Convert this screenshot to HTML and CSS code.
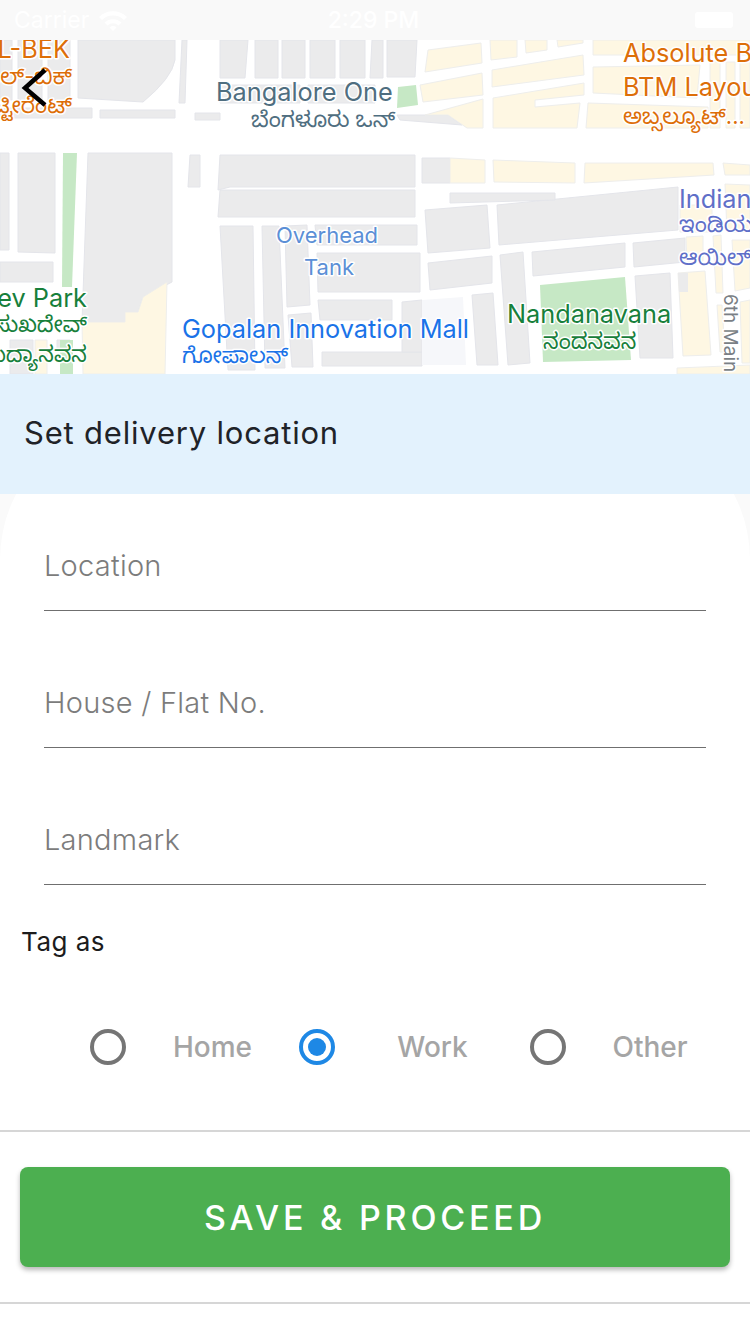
FILE: index.html
```html
<!DOCTYPE html>
<html lang="en">
<head>
  <meta charset="utf-8" />
  <meta name="viewport" content="width=device-width, initial-scale=1" />
  <title>Set delivery location</title>
  <link rel="stylesheet" href="styles.css">
</head>
<body>
  <div class="status-bar">
    <div class="status-left">
      <span>Carrier</span>
      <svg class="wifi" width="30" height="22" viewBox="0 0 30 22">
        <path d="M1 8a20 20 0 0 1 28 0l-3 3a16 16 0 0 0-22 0z" />
        <path d="M6.500 13.500a12.500 12.500 0 0 1 17 0l-3 3a8 8 0 0 0-11 0z" />
        <path d="M11.500 18.500a5 5 0 0 1 7 0l-3.500 3.500z" />
      </svg>
    </div>
    <span class="status-time">2:29 PM</span>
    <div class="battery"></div>
  </div>

  <div class="map">
    <svg class="map-svg" width="750" height="334" viewBox="0 40 750 334">
      <!-- buildings -->
      <g class="blocks">
        <path d="M0 40H12V100H0Z" />
        <path d="M18 40H42V100H18Z" />
        <path d="M48 40H70V100H48Z" />
        <path d="M78 40H175V60Q172 78 143 102L78 98Z" />
        <path d="M182 40H187L185 103H179Z" />
        <path d="M0 108H92V118H0Z" />
        <path d="M100 110H175V118H100Z" />
        <path d="M195 113H220V120H195Z" />
        <path d="M220 40H248L245 78H220Z" />
        <path d="M255 40H278V78H255Z" />
        <path d="M282 40H305V78H282Z" />
        <path d="M310 40H335V78H310Z" />
        <path d="M340 40H365V78H340Z" />
        <path d="M372 40H383V78H370Z" />
        <path d="M220 85H300V103H220Z" />
        <path d="M308 85H375V103H308Z" />
        <path d="M387 40H417L415 77H387Z" />
        <path d="M397 115H448L462 125L400 120Z" />
        <path d="M0 153H9V250H0Z" />
        <path d="M18 153H55V253L18 252Z" />
        <path d="M88 153H172V282L143 297L138 312H125V322H82Z" />
        <path d="M190 155H200V187H188Z" />
        <path d="M220 155H415V187H230L218 190Z" />
        <path d="M422 158H450V183H422Z" />
        <path d="M0 262H53V282H0Z" />
        <path d="M10 340H33V374H10Z" />
        <path d="M57 340H70V350H57Z" />
        <path d="M220 190H415V217H218Z" />
        <path d="M220 226H253L255 370H228Z" />
        <path d="M262 226H279L285 368H265Z" />
        <path d="M285 226L307 225L310 305L287 307Z" />
        <path d="M288 315L311 313L313 367H292Z" />
        <path d="M315 225H417V245H317Z" />
        <path d="M317 253H420V292H318Z" />
        <path d="M318 300H392V320H320Z" />
        <path d="M322 352H422V366H322Z" />
        <path d="M402 302L422 300V352H402Z" />
        <path d="M425 210L487 205L490 248L428 253Z" />
        <path d="M497 205L678 187V230L499 245Z" />
        <path d="M428 263L492 256L492 283L430 290Z" />
        <path d="M532 252L625 243L625 267L533 276Z" />
        <path d="M633 243L685 238V262L634 267Z" />
        <path d="M500 255L523 252L530 363L508 365Z" />
        <path d="M472 295L493 293L498 365L477 365Z" />
        <path d="M635 276L670 273L673 358L640 358Z" />
        <path d="M450 193H555V200L450 203Z" />
      </g>
      <path class="pale" d="M422 300L463 297L466 365H422Z" />
      <!-- residential patches -->
      <g class="cream">
        <path d="M428 50L481 43L482 63L425 72Z" />
        <path d="M490 40H517V57L491 60Z" />
        <path d="M525 40H547V50L526 53Z" />
        <path d="M557 40H583V43L558 47Z" />
        <path d="M593 40H750V55H593Z" />
        <path d="M420 85L482 73L483 95L423 102Z" />
        <path d="M492 70L583 55L584 75L492 87Z" />
        <path d="M493 98L584 83L584 95L535 100V107L580 103L577 128H493Z" />
        <path d="M425 115L483 99V128H467L448 115Z" />
        <path d="M593 67L700 65L697 98L593 93Z" />
        <path d="M588 103L708 107V128H586Z" />
        <path d="M710 62H720V128H710Z" />
        <path d="M726 62H735V128H726Z" />
        <path d="M740 62H750V128H740Z" />
        <path d="M450 158L485 160V183H450Z" />
        <path d="M493 160L575 163V183L494 182Z" />
        <path d="M585 163H713L714 175L584 183Z" />
        <path d="M723 163L750 165V175H725Z" />
        <path d="M82 322H125V312H138L143 297L167 282L165 374H83Z" />
        <path d="M35 340H47V374H35Z" />
        <path d="M680 205H712V232H680Z" />
        <path d="M725 184L750 185V232H727Z" />
        <path d="M686 237L703 236V261L687 262Z" />
        <path d="M713 236L721 235L723 293H716Z" />
        <path d="M732 240H750V288L735 291Z" />
        <path d="M678 273L705 271L711 355L683 356Z" />
        <path d="M717 305H722L725 352H720Z" />
        <path d="M740 302L750 300V363H742Z" />
        <path d="M677 368L750 365V374H677Z" />
      </g>
      <path class="corner" d="M678 273H688V292H679Z" />
      <!-- parks -->
      <g class="park">
        <path d="M398 87L416 85L418 105L397 108Z" />
        <path d="M63 153H77L72 287H62Z" />
        <path d="M60 340H73V374H60Z" />
        <path d="M540 285L625 277L631 360L543 362Z" />
      </g>
      <!-- labels -->
      <g class="labels">
        <text class="orange lg" x="70" y="58" text-anchor="end">L-BEK</text>
        <text class="orange sm" x="72" y="84" text-anchor="end">ಎಲ್-ಬಿಕ್</text>
        <text class="orange sm" x="72" y="113" text-anchor="end">ಟ್ಟೀರೆಂಟ್</text>
        <text class="slate lg" x="216" y="101">Bangalore One</text>
        <text class="slate sm" x="251" y="127">ಬೆಂಗಳೂರು ಒನ್</text>
        <text class="orange lg" x="623" y="62">Absolute B</text>
        <text class="orange lg" x="623" y="96">BTM Layou</text>
        <text class="orange sm" x="623" y="124">ಅಬ್ಸಲ್ಯೂಟ್...</text>
        <text class="indigo lg" x="679" y="208">Indian</text>
        <text class="indigo sm" x="679" y="232">ಇಂಡಿಯ</text>
        <text class="indigo sm" x="679" y="265">ಆಯಿಲ್</text>
        <text class="steel md" x="276" y="243">Overhead</text>
        <text class="steel md" x="304" y="275">Tank</text>
        <text class="green lg" x="87" y="307" text-anchor="end">ev Park</text>
        <text class="green sm" x="87" y="332" text-anchor="end">ಸುಖದೇವ್</text>
        <text class="green sm" x="87" y="362" text-anchor="end">ಉದ್ಯಾನವನ</text>
        <text class="blue lg" x="182" y="338">Gopalan Innovation Mall</text>
        <text class="blue sm" x="182" y="363">ಗೋಪಾಲನ್</text>
        <text class="green lg" x="507" y="323">Nandanavana</text>
        <text class="green sm" x="543" y="349">ನಂದನವನ</text>
        <text class="grey xs" transform="translate(724 294) rotate(90)">6th Main</text>
      </g>
    </svg>
    <svg class="back" width="26" height="40" viewBox="0 0 26 40">
      <path d="M24 2L4 20L24 37" />
    </svg>
  </div>

  <div class="header">Set delivery location</div>

  <div class="form-card">
    <div class="field">Location</div>
    <div class="field">House / Flat No.</div>
    <div class="field">Landmark</div>
    <div class="tag-title">Tag as</div>
    <div class="tag-row">
      <span class="radio"></span>
      <span class="tag-label">Home</span>
      <span class="radio on"></span>
      <span class="tag-label">Work</span>
      <span class="radio"></span>
      <span class="tag-label">Other</span>
    </div>
    <div class="footer-bar">
      <button class="save-btn">SAVE &amp; PROCEED</button>
    </div>
  </div>
</body>
</html>
```

FILE: styles.css
```css
* {
  box-sizing: border-box;
}
body {
  margin: 0;
  width: 750px;
  height: 1334px;
  overflow: hidden;
  background: #fafafa;
  font-family: Inter, "Noto Sans", sans-serif;
}

.status-bar {
  height: 40px;
  background: #f9f9f9;
  color: #fff;
  font-size: 23px;
  display: grid;
  grid-template-columns: 1fr auto 1fr;
  align-items: center;
  padding: 0 17px 0 14px;
}
.status-left {
  display: flex;
  align-items: center;
  gap: 9px;
}
.wifi {
  fill: #fff;
}
.status-time {
  font-weight: 500;
}
.battery {
  justify-self: end;
  width: 38px;
  height: 16px;
  border-radius: 3px;
  background: #fff;
}

.map {
  position: relative;
  height: 334px;
  background: #fff;
  overflow: hidden;
}
.map-svg {
  display: block;
}
.back {
  position: absolute;
  left: 21px;
  top: 28px;
  fill: none;
  stroke: #000;
  stroke-width: 4.500;
}
.blocks path {
  fill: #ebebec;
  stroke: #e4e5ea;
  stroke-width: 1;
}
.pale {
  fill: #f6f7fa;
}
.corner {
  fill: #ebebec;
}
.cream path {
  fill: #fef7e3;
  stroke: #eeeeec;
  stroke-width: 1;
}
.park path {
  fill: #c6e8c5;
}
.labels text {
  font-family: Inter, "Noto Sans", "Noto Sans Kannada", sans-serif;
  paint-order: stroke;
  stroke: #fff;
  stroke-width: 3px;
  stroke-linejoin: round;
}
.lg {
  font-size: 25.300px;
}
.md {
  font-size: 22px;
}
.sm {
  font-size: 22px;
}
.xs {
  font-size: 19px;
}
.orange {
  fill: #dd6e08;
}
.slate {
  fill: #4f6e80;
}
.indigo {
  fill: #5f6fc8;
}
.steel {
  fill: #5b8fd6;
}
.green {
  fill: #17803b;
}
.blue {
  fill: #1a73e8;
}
.grey {
  fill: #7a7f85;
}

.header {
  position: relative;
  z-index: 1;
  height: 120px;
  background: #e3f2fd;
  color: #1f2328;
  font-size: 31px;
  letter-spacing: 0.800px;
  display: flex;
  align-items: center;
  padding: 0 0 3px 24px;
}

/* top of the card sits under the header, only the lower part of its curve shows */
.form-card {
  height: 918px;
  margin-top: -78px;
  padding-top: 78px;
  background: #fff;
  border-radius: 144px 144px 0 0;
}
.field {
  height: 117px;
  margin: 0 44px 20px;
  padding-top: 54px;
  border-bottom: 1px solid #6f6f6f;
  color: #7c7c7c;
  font-size: 29px;
  font-weight: 300;
  letter-spacing: 0.250px;
  line-height: 36px;
}

.tag-title {
  margin: 41px 0 0 21px;
  font-size: 26px;
  letter-spacing: 0.500px;
  line-height: 32px;
  color: #1c1c1c;
}
.tag-row {
  margin-top: 71px;
  padding-left: 90px;
  display: grid;
  grid-template-columns: 36px 173px 36px 195px 36px 168px;
  align-items: center;
  height: 36px;
}
.radio {
  width: 36px;
  height: 36px;
  border: 4px solid #757575;
  border-radius: 50%;
  display: flex;
  align-items: center;
  justify-content: center;
}
.radio.on {
  border-color: #1e88e5;
}
.radio.on::after {
  content: "";
  width: 18px;
  height: 18px;
  border-radius: 50%;
  background: #1e88e5;
}
.tag-label {
  text-align: center;
  color: #a5a5a5;
  font-size: 28px;
  font-weight: 500;
}

.footer-bar {
  margin-top: 65px;
  height: 174px;
  border-top: 2px solid #d6d6d6;
  border-bottom: 2px solid #d6d6d6;
  padding: 35px 20px;
}
.save-btn {
  display: block;
  width: 100%;
  height: 100px;
  border: 0;
  border-radius: 8px;
  background: #4caf50;
  box-shadow: 0 3px 5px rgba(0, 0, 0, 0.28);
  color: #fff;
  font-family: inherit;
  font-size: 34px;
  font-weight: 500;
  letter-spacing: 3.800px;
}
```
